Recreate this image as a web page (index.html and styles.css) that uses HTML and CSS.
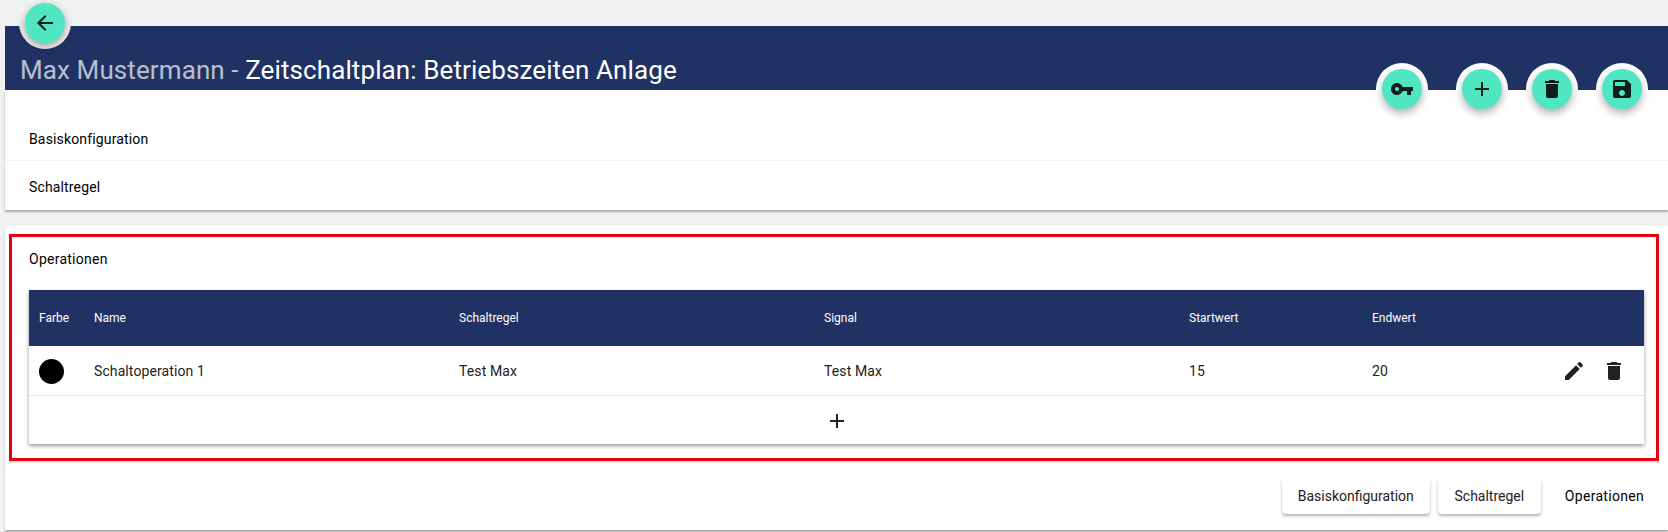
FILE: index.html
```html
<!DOCTYPE html>
<html lang="de">
<head>
<meta charset="utf-8">
<title>Zeitschaltplan</title>
<link rel="stylesheet" href="styles.css">
</head>
<body>
<button class="fab fab-back" aria-label="Zurück"><svg viewBox="0 0 24 24"><path d="M20 11H7.83l5.59-5.59L12 4l-8 8 8 8 1.41-1.41L7.83 13H20v-2z"/></svg></button>
<header class="header">
  <h1 class="title"><span class="title-name">Max Mustermann - </span>Zeitschaltplan: Betriebszeiten Anlage</h1>
  <div class="fab-bar">
    <button class="fab" aria-label="Schlüssel"><svg viewBox="0 0 24 24"><path d="M12.65 10C11.83 7.67 9.61 6 7 6c-3.31 0-6 2.69-6 6s2.69 6 6 6c2.61 0 4.83-1.67 5.65-4H17v4h4v-4h2v-4H12.65zM7 14c-1.1 0-2-.9-2-2s.9-2 2-2 2 .9 2 2-.9 2-2 2z"/></svg></button>
    <button class="fab fab-add" aria-label="Hinzufügen"><svg viewBox="0 0 24 24"><path d="M19 13h-6v6h-2v-6H5v-2h6V5h2v6h6v2z"/></svg></button>
    <button class="fab" aria-label="Löschen"><svg viewBox="0 0 24 24"><path d="M6 19c0 1.1.9 2 2 2h8c1.1 0 2-.9 2-2V7H6v12zM19 4h-3.5l-1-1h-5l-1 1H5v2h14V4z"/></svg></button>
    <button class="fab" aria-label="Speichern"><svg viewBox="0 0 24 24"><path d="M17 3H5c-1.11 0-2 .9-2 2v14c0 1.1.89 2 2 2h14c1.1 0 2-.9 2-2V7l-4-4zm-5 16c-1.66 0-3-1.34-3-3s1.34-3 3-3 3 1.34 3 3-1.34 3-3 3zm3-10H5V5h10v4z"/></svg></button>
  </div>
</header>
<section class="panels">
  <div class="panel-row panel-first">Basiskonfiguration</div>
  <div class="panel-row">Schaltregel</div>
</section>
<main class="card">
  <section class="highlight">
    <h2 class="section-title">Operationen</h2>
    <div class="table">
      <div class="grid head">
        <div class="cell-first">Farbe</div><div>Name</div><div>Schaltregel</div><div>Signal</div><div>Startwert</div><div>Endwert</div><div></div>
      </div>
      <div class="grid row">
        <div class="cell-first"><span class="dot"></span></div><div>Schaltoperation 1</div><div>Test Max</div><div>Test Max</div><div>15</div><div>20</div>
        <div class="actions">
          <svg class="icon" viewBox="0 0 24 24"><path d="M3 17.25V21h3.75L17.81 9.94l-3.75-3.75L3 17.25zM20.71 7.04c.39-.39.39-1.02 0-1.41l-2.34-2.34c-.39-.39-1.02-.39-1.41 0l-1.83 1.83 3.75 3.75 1.83-1.83z"/></svg>
          <svg class="icon" viewBox="0 0 24 24"><path d="M6 19c0 1.1.9 2 2 2h8c1.1 0 2-.9 2-2V7H6v12zM19 4h-3.5l-1-1h-5l-1 1H5v2h14V4z"/></svg>
        </div>
      </div>
      <div class="add-row"><svg class="icon" viewBox="0 0 24 24"><path d="M19 13h-6v6h-2v-6H5v-2h6V5h2v6h6v2z"/></svg></div>
    </div>
  </section>
  <nav class="steps">
    <button class="step step-raised">Basiskonfiguration</button>
    <button class="step step-raised step-short">Schaltregel</button>
    <button class="step step-current">Operationen</button>
  </nav>
</main>
</body>
</html>
```
FILE: styles.css
```css
* { box-sizing: border-box; }
html, body { height: 100%; }
body {
  margin: 0;
  padding: 26px 0 0 5px;
  background: #f0f2f2;
  font-family: Roboto, "Liberation Sans", sans-serif;
  font-size: 14px;
  color: #000;
  overflow: hidden;
}
.header {
  position: relative;
  height: 64px;
  background: #203264;
  color: #fff;
  display: flex;
  align-items: flex-end;
  padding: 0 0 4px 15px;
}
.title { margin: 0; font-size: 26px; font-weight: 400; line-height: 32px; letter-spacing: .1px; }
.title-name { color: rgba(255, 255, 255, .7); }
.fab {
  width: 40px;
  height: 40px;
  padding: 0;
  border: 0;
  border-radius: 50%;
  background: #50e6c2;
  display: flex;
  align-items: center;
  justify-content: center;
  box-shadow: 0 4px 9px rgba(0, 0, 0, .32), 0 0 0 6px #fff;
}
.fab svg { width: 24px; height: 24px; fill: #0d1f1c; }
.fab-back {
  position: absolute;
  left: 25px;
  top: 3px;
  z-index: 2;
  box-shadow: 0 3px 8px rgba(0, 0, 0, .35), 0 0 0 6px #f0f2f2;
}
.fab-bar {
  position: absolute;
  top: 43px;
  right: 26px;
  display: flex;
  gap: 30px;
}
.fab-add { margin-left: 10px; }
.panels {
  height: 120px;
  background: #fff;
  box-shadow: 0 2px 2px rgba(0, 0, 0, .3);
  letter-spacing: .15px;
}
.panel-row {
  height: 49px;
  display: flex;
  align-items: center;
  padding-left: 24px;
  padding-top: 2px;
}
.panel-first {
  height: 71px;
  padding-top: 27px;
  border-bottom: 1px solid #f2f2f2;
}
.card {
  margin-top: 16px;
  height: 304px;
  background: #fff;
  border-radius: 4px 0 0 0;
  padding-top: 8px;
  box-shadow: 0 2px 2px rgba(0, 0, 0, .3);
}
.highlight {
  height: 227px;
  margin: 0 9px 0 4px;
  border: 3px solid #e60012;
  padding: 11px 12px 0 17px;
  box-shadow: 0 2px 0 #e4e4e4;
}
.section-title {
  margin: 0;
  height: 32px;
  font-size: 14px;
  font-weight: 400;
  line-height: 22px;
  letter-spacing: .25px;
}
.table {
  margin-top: 10px;
  background: #fff;
  box-shadow: 0 2px 4px rgba(0, 0, 0, .4);
}
.grid {
  display: grid;
  grid-template-columns: 65px 365px 365px 365px 183px 150px 1fr;
  align-items: center;
}
.head {
  height: 56px;
  background: #203264;
  color: #fff;
  font-size: 12px;
}
.cell-first { padding-left: 10px; }
.row {
  height: 50px;
  padding-top: 1px;
  border-bottom: 1px solid #e0e0e0;
  color: #222;
  font-size: 14px;
  letter-spacing: .1px;
}
.dot {
  display: block;
  width: 25px;
  height: 25px;
  border-radius: 50%;
  background: #000;
}
.actions {
  display: flex;
  gap: 16px;
  justify-content: flex-end;
  padding-right: 18px;
}
.icon { width: 24px; height: 24px; fill: #212121; display: block; }
.add-row {
  height: 48px;
  padding-top: 2px;
  display: flex;
  align-items: center;
  justify-content: center;
}
.steps {
  display: flex;
  justify-content: flex-end;
  align-items: center;
  gap: 8px;
  padding: 17px 8px 0 0;
}
.step {
  height: 36px;
  padding: 0 16px;
  border: 0;
  border-radius: 4px;
  background: #fff;
  color: #000;
  font: 14px Roboto, "Liberation Sans", sans-serif;
}
.step-raised {
  color: #222;
  box-shadow: 0 2px 3px rgba(0, 0, 0, .3);
}
.step-short { min-width: 103px; }
.step-current { letter-spacing: .3px; }
```
